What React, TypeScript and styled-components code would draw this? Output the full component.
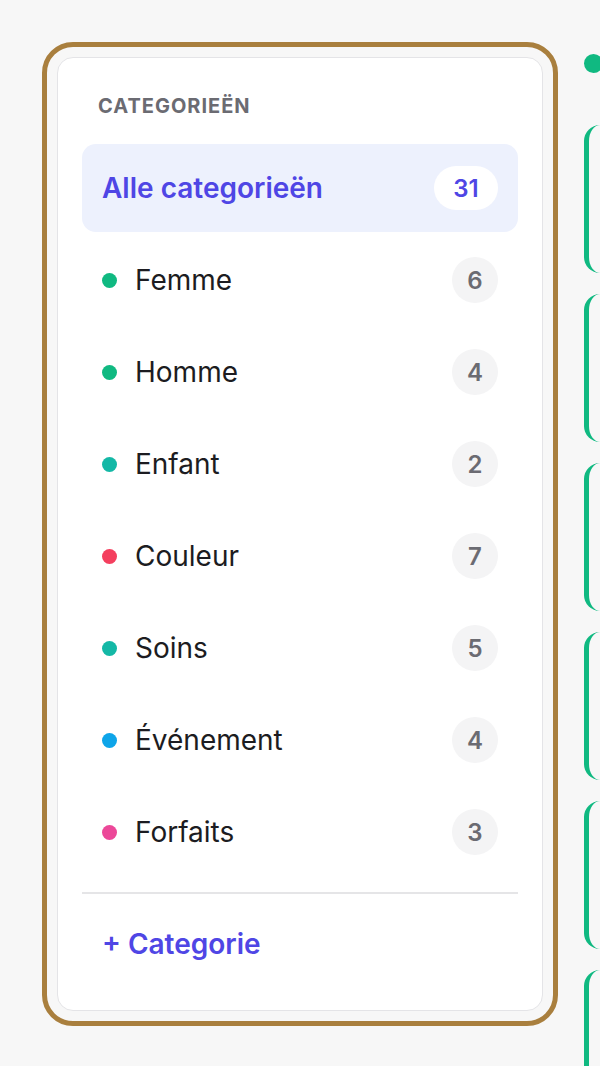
import * as React from "react";
import styled, { createGlobalStyle } from "styled-components";

const GlobalStyle = createGlobalStyle`
  html, body {
    margin: 0;
    padding: 0;
    background: #f7f7f7;
    font-family: Inter, "Noto Sans", "Liberation Sans", sans-serif;
  }
  * { box-sizing: border-box; }
`;

type Category = { name: string, color: string, count: number };

const categories: Category[] = [
  { name: "Femme", color: "#10b981", count: 6 },
  { name: "Homme", color: "#10b981", count: 4 },
  { name: "Enfant", color: "#14b8a6", count: 2 },
  { name: "Couleur", color: "#f43f5e", count: 7 },
  { name: "Soins", color: "#14b8a6", count: 5 },
  { name: "Événement", color: "#0ea5e9", count: 4 },
  { name: "Forfaits", color: "#ec4899", count: 3 },
];

const Page = styled.div`
  display: flex;
  align-items: flex-start;
  gap: 41px;
  width: 600px;
  height: 1066px;
  padding: 54px 0 0 57px;
  overflow: hidden;
`;

const Sidebar = styled.aside`
  flex: 0 0 486px;
  margin-top: 3px;
  background: #fff;
  border: 1px solid #e4e4e7;
  border-radius: 16px;
  outline: 5px solid #a97f3e;
  outline-offset: 10px;
  padding: 37px 24px 32px;
`;

const Heading = styled.div`
  font-size: 20px;
  line-height: 22px;
  font-weight: 700;
  letter-spacing: 0.05em;
  text-transform: uppercase;
  color: #6b6b72;
  padding-left: 16px;
  margin-bottom: 27px;
`;

const List = styled.div`
  display: flex;
  flex-direction: column;
  gap: 4px;
`;

const Row = styled.div<{ active?: boolean }>`
  display: flex;
  align-items: center;
  height: 88px;
  padding: 0 20px;
  border-radius: 14px;
  background: ${({ active }) => active ? "#edf1fd" : "transparent"};
`;

const Dot = styled.span<{ color: string }>`
  flex: 0 0 15px;
  width: 15px;
  height: 15px;
  border-radius: 50%;
  background: ${({ color }) => color};
  margin-right: 18px;
`;

const Label = styled.span<{ active?: boolean }>`
  flex: 1;
  font-size: 28px;
  font-weight: ${({ active }) => active ? 600 : 400};
  color: ${({ active }) => active ? "#4f46e5" : "#1c1c21"};
`;

const Count = styled.span<{ active?: boolean }>`
  display: flex;
  align-items: center;
  justify-content: center;
  min-width: ${({ active }) => active ? "64px" : "46px"};
  height: ${({ active }) => active ? "44px" : "46px"};
  padding: 0 10px;
  border-radius: 23px;
  background: ${({ active }) => active ? "#fff" : "#f4f4f5"};
  color: ${({ active }) => active ? "#4f46e5" : "#6b6b72"};
  font-size: 24px;
  font-weight: 600;
`;

const Divider = styled.hr`
  border: 0;
  height: 2px;
  background: #e5e5e7;
  margin: 16px 0 0;
`;

const AddButton = styled.button`
  display: block;
  background: none;
  border: 0;
  font-family: inherit;
  font-size: 28px;
  line-height: 32px;
  font-weight: 600;
  color: #4f46e5;
  padding: 34px 20px 18px;
  cursor: pointer;
`;

const Content = styled.section`
  flex: 0 0 auto;
  width: 400px;
  display: flex;
  flex-direction: column;
`;

const LegendDot = styled.span`
  width: 19px;
  height: 19px;
  border-radius: 50%;
  background: #10b981;
  margin-bottom: 52px;
`;

const Cards = styled.div`
  display: flex;
  flex-direction: column;
  gap: 21px;
`;

const ServiceCard = styled.div`
  height: 148px;
  border-left: 5px solid #10b981;
  border-radius: 16px;
  background: #f7f7f7;
`;

const App = () => {
  return (
    <>
      <GlobalStyle/>
      <Page>
        <Sidebar>
          <Heading>Categorieën</Heading>
          <List>
            <Row active>
              <Label active>Alle categorieën</Label>
              <Count active>31</Count>
            </Row>
            {categories.map((cat) => (
              <Row key={cat.name}>
                <Dot color={cat.color}/>
                <Label>{cat.name}</Label>
                <Count>{cat.count}</Count>
              </Row>
            ))}
          </List>
          <Divider/>
          <AddButton>+ Categorie</AddButton>
        </Sidebar>

        <Content>
          <LegendDot/>
          <Cards>
            {[0, 1, 2, 3, 4, 5].map((i) => <ServiceCard key={i}/>)}
          </Cards>
        </Content>
      </Page>
    </>
  );
};

export default App;
